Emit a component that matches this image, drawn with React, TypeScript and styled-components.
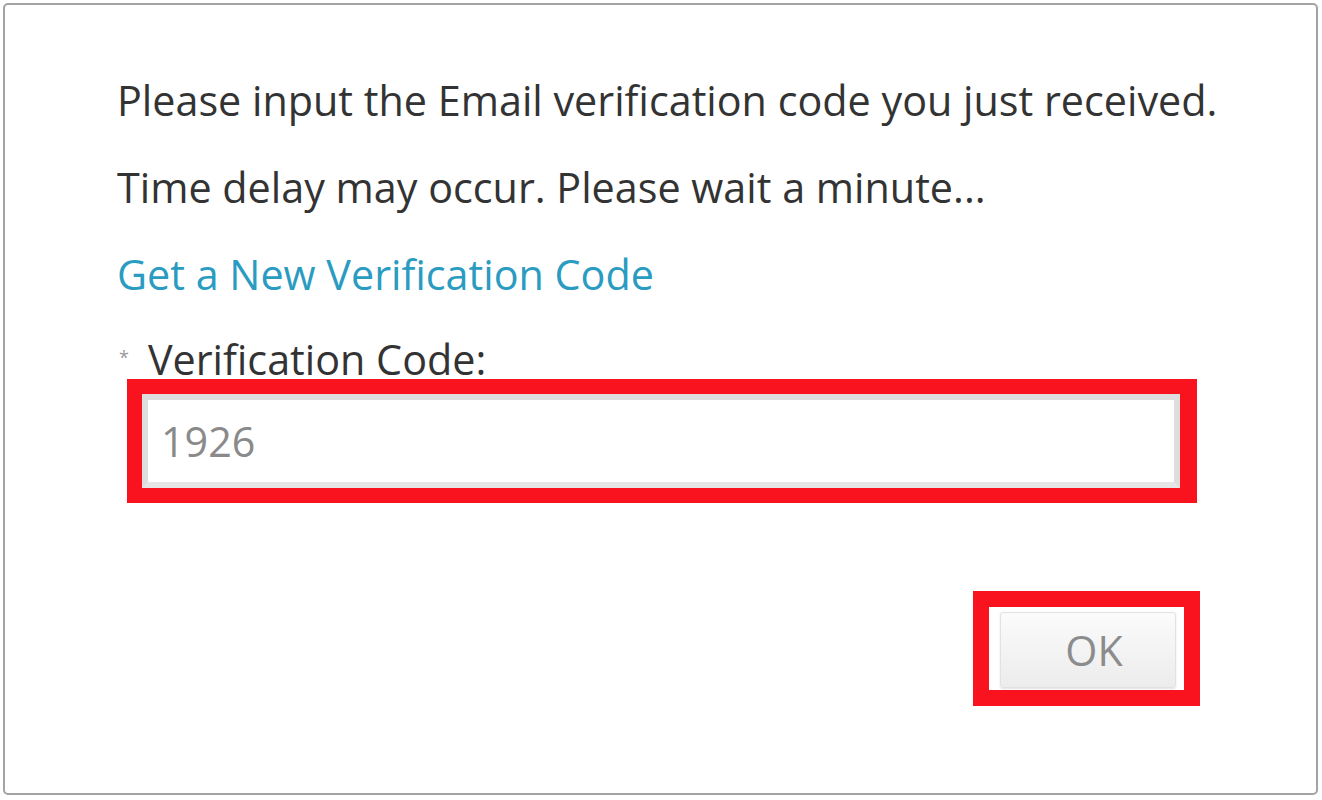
import React from 'react';
import styled, { createGlobalStyle } from 'styled-components';

const GlobalStyle = createGlobalStyle`
  html, body {
    margin: 0;
    padding: 0;
    background: #ffffff;
  }
  body {
    font-family: "Open Sans", "Noto Sans", "DejaVu Sans", sans-serif;
  }
`;

const Page = styled.div`
  width: 1322px;
  height: 800px;
  padding: 3px 4px 5px 3px;
  box-sizing: border-box;
`;

const Dialog = styled.div`
  height: 100%;
  box-sizing: border-box;
  border: 2px solid #a3a3a3;
  border-radius: 5px;
  background: #ffffff;
  padding: 70px 0 0 112px;
  display: flex;
  flex-direction: column;
`;

const Line = styled.p<{ $link?: boolean }>`
  margin: 0 0 37px;
  font-size: 41.3px;
  line-height: 50px;
  color: ${(p) => (p.$link ? '#2a9bc1' : '#333333')};
  white-space: nowrap;
  cursor: ${(p) => (p.$link ? 'pointer' : 'default')};
`;

const Label = styled.label`
  display: flex;
  align-items: center;
  gap: 19px;
  font-size: 41.3px;
  line-height: 50px;
  color: #333333;
  margin-top: -2px;
`;

const Star = styled.span`
  font-size: 18px;
  line-height: 18px;
  color: #9a9a9a;
  margin: -4px 0 0 2px;
`;

const Highlight = styled.div`
  border: 15px solid #f8131f;
  box-sizing: border-box;
`;

const InputHighlight = styled(Highlight)`
  margin: -5px 0 0 10px;
  width: 1070px;
  height: 124px;
  border-right-width: 17px;
`;

const CodeInput = styled.input`
  display: block;
  width: 100%;
  height: 100%;
  box-sizing: border-box;
  border: 6px solid #dedede;
  border-bottom-color: #e6e6e6;
  background: #ffffff;
  padding: 0 0 0 13px;
  font-family: "Open Sans", "Noto Sans", sans-serif;
  font-size: 41.3px;
  color: #8a8a8a;
  outline: none;
`;

const Footer = styled.div`
  display: flex;
  justify-content: flex-end;
  width: 1083px;
  margin-top: 88px;
`;

const ButtonHighlight = styled(Highlight)`
  width: 227px;
  height: 115px;
  border-width: 16px;
  padding: 5px 8px 2px 11px;
  background: #ffffff;
`;

const OkButton = styled.button`
  width: 100%;
  height: 100%;
  border: 1px solid #e2e2e2;
  border-radius: 3px;
  background: linear-gradient(#fbfbfb, #ececec);
  box-shadow: 0 1px 2px rgba(0, 0, 0, 0.12);
  padding: 0 0 0 12px;
  font-family: "Open Sans", "Noto Sans", sans-serif;
  font-size: 41.3px;
  color: #8c8c8c;
  cursor: pointer;
`;

export default function App() {
  return (
    <>
      <GlobalStyle />
      <Page>
        <Dialog>
          <Line>Please input the Email verification code you just received.</Line>
          <Line>Time delay may occur. Please wait a minute...</Line>
          <Line $link>Get a New Verification Code</Line>
          <Label>
            <Star>*</Star>
            Verification Code:
          </Label>
          <InputHighlight>
            <CodeInput defaultValue="1926" />
          </InputHighlight>
          <Footer>
            <ButtonHighlight>
              <OkButton>OK</OkButton>
            </ButtonHighlight>
          </Footer>
        </Dialog>
      </Page>
    </>
  );
}
